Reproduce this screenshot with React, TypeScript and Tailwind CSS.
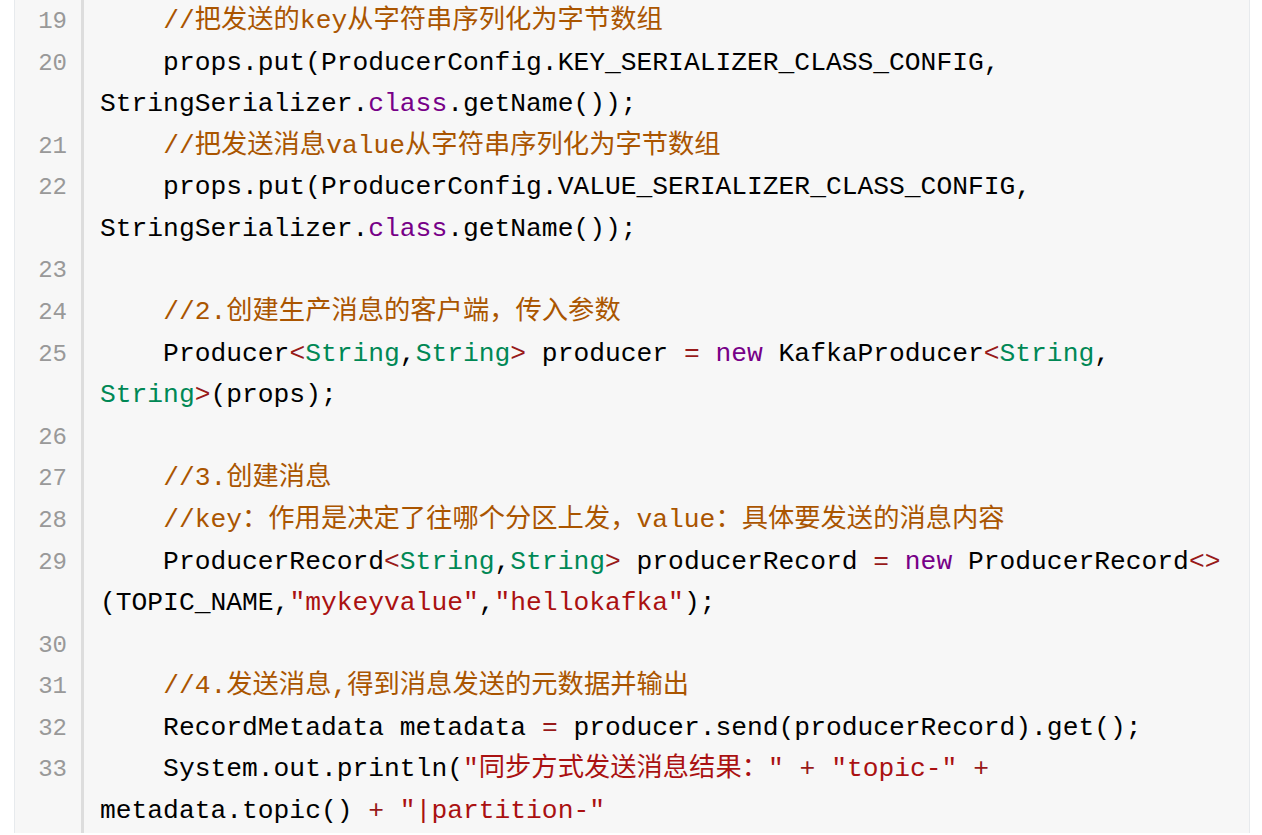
type Tok = [string, string?];

const C = 'text-[#aa5500]';
const K = 'text-[#770088]';
const S = 'text-[#aa1111]';
const O = 'text-[#981a1a]';
const T = 'text-[#008855]';

// 每个逻辑行 -> 若干显示行（按参考图手动折行）
const lines: { no: number; rows: Tok[][] }[] = [
    { no: 19, rows: [[['    '], ['//把发送的key从字符串序列化为字节数组', C]]] },
    {
        no: 20,
        rows: [
            [['    props.put(ProducerConfig.KEY_SERIALIZER_CLASS_CONFIG,']],
            [['StringSerializer.'], ['class', K], ['.getName());']],
        ],
    },
    { no: 21, rows: [[['    '], ['//把发送消息value从字符串序列化为字节数组', C]]] },
    {
        no: 22,
        rows: [
            [['    props.put(ProducerConfig.VALUE_SERIALIZER_CLASS_CONFIG,']],
            [['StringSerializer.'], ['class', K], ['.getName());']],
        ],
    },
    { no: 23, rows: [[[' ']]] },
    { no: 24, rows: [[['    '], ['//2.创建生产消息的客户端，传入参数', C]]] },
    {
        no: 25,
        rows: [
            [
                ['    Producer'],
                ['<', O],
                ['String', T],
                [','],
                ['String', T],
                ['>', O],
                [' producer '],
                ['=', O],
                [' '],
                ['new', K],
                [' KafkaProducer'],
                ['<', O],
                ['String', T],
                [','],
            ],
            [['String', T], ['>', O], ['(props);']],
        ],
    },
    { no: 26, rows: [[[' ']]] },
    { no: 27, rows: [[['    '], ['//3.创建消息', C]]] },
    {
        no: 28,
        rows: [[['    '], ['//key：作用是决定了往哪个分区上发，value：具体要发送的消息内容', C]]],
    },
    {
        no: 29,
        rows: [
            [
                ['    ProducerRecord'],
                ['<', O],
                ['String', T],
                [','],
                ['String', T],
                ['>', O],
                [' producerRecord '],
                ['=', O],
                [' '],
                ['new', K],
                [' ProducerRecord'],
                ['<>', O],
            ],
            [
                ['(TOPIC_NAME,'],
                ['"mykeyvalue"', S],
                [','],
                ['"hellokafka"', S],
                [');'],
            ],
        ],
    },
    { no: 30, rows: [[[' ']]] },
    { no: 31, rows: [[['    '], ['//4.发送消息,得到消息发送的元数据并输出', C]]] },
    {
        no: 32,
        rows: [
            [
                ['    RecordMetadata metadata '],
                ['=', O],
                [' producer.send(producerRecord).get();'],
            ],
        ],
    },
    {
        no: 33,
        rows: [
            [
                ['    System.out.println('],
                ['"同步方式发送消息结果："', S],
                [' '],
                ['+', O],
                [' '],
                ['"topic-"', S],
                [' '],
                ['+', O],
            ],
            [['metadata.topic() '], ['+', O], [' '], ['"|partition-"', S]],
        ],
    },
];

export default function App() {
    return (
        <div className="h-[835px] w-[1262px] overflow-hidden bg-white pl-[14px]">
            <div className="w-[1236px] border-x border-[#e7eaed] bg-[#f7f7f7]">
                {lines.map((line, idx) => (
                    <div key={line.no} className={idx === 0 ? 'flex pt-0' : 'flex'}>
                        <div
                            className={
                                idx === 0
                                    ? 'w-[69px] shrink-0 border-r-[3px] border-[#dddddd] pt-[1px] pr-[14px] text-right text-[24px] leading-[41.58px] text-[#999999]'
                                    : 'w-[69px] shrink-0 border-r-[3px] border-[#dddddd] pr-[14px] text-right text-[24px] leading-[41.58px] text-[#999999]'
                            }
                            style={{ fontFamily: '"Liberation Mono", monospace' }}
                        >
                            {line.no}
                        </div>
                        <div
                            className={
                                idx === 0
                                    ? 'pt-[1px] pl-[16px] text-[26.3px] leading-[41.58px] text-black'
                                    : 'pl-[16px] text-[26.3px] leading-[41.58px] text-black'
                            }
                            style={{
                                fontFamily:
                                    '"Liberation Mono", "Noto Sans CJK SC", monospace',
                            }}
                        >
                            {line.rows.map((row, i) => (
                                <div key={i} className="whitespace-pre">
                                    {row.map(([t, cls], j) => (
                                        <span key={j} className={cls}>
                                            {t}
                                        </span>
                                    ))}
                                </div>
                            ))}
                        </div>
                    </div>
                ))}
            </div>
        </div>
    );
}
